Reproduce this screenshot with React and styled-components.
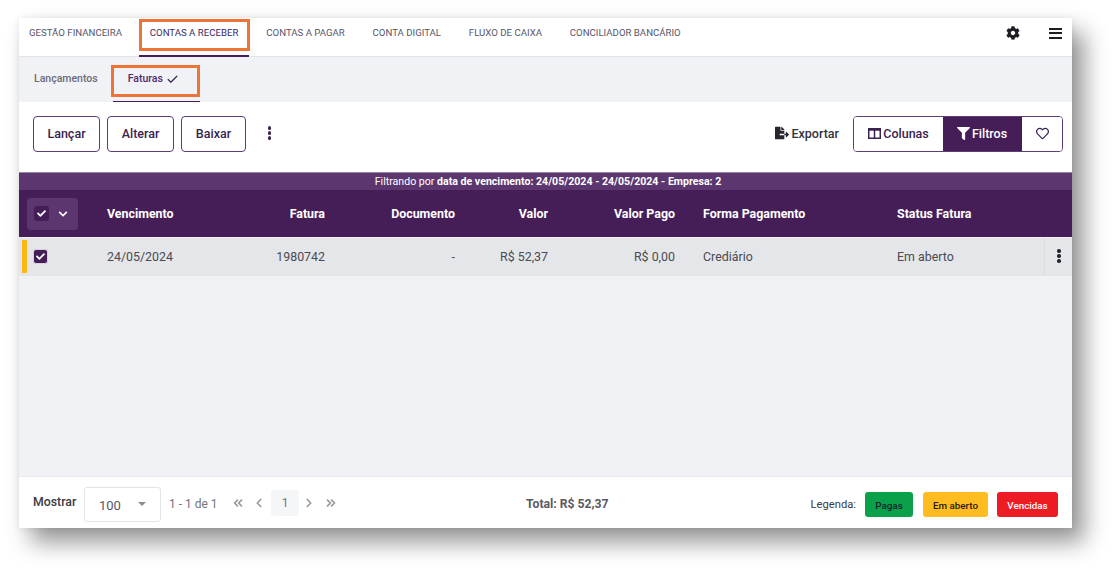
import React from 'react';
import styled, { createGlobalStyle } from 'styled-components';
import { FaCog, FaFileExport, FaFilter, FaCheck, FaChevronDown, FaRegHeart } from 'react-icons/fa';
import { FiCheck, FiChevronsLeft, FiChevronsRight, FiChevronLeft, FiChevronRight } from 'react-icons/fi';

const Global = createGlobalStyle`
  html, body { margin: 0; padding: 0; background: #fff; width: 1120px; height: 576px; overflow: hidden; }
  body { font-family: Roboto, "Liberation Sans", sans-serif; }
  * { box-sizing: border-box; }
`;

const Panel = styled.div`
  position: relative;
  margin: 18px 0 0 19px;
  width: 1053px;
  height: 510px;
  background: #f1f2f6;
  display: flex;
  flex-direction: column;
  box-shadow: 12px 14px 22px rgba(0,0,0,.42), 0 0 8px rgba(0,0,0,.08);
`;

const TopNav = styled.nav`
  height: 39px;
  background: #fff;
  border-bottom: 1px solid #e2e2e8;
  display: flex;
  align-items: flex-start;
  padding-left: 10px;
  flex: none;
`;
const NavItem = styled.div`
  font-size: 9.65px;
  height: ${p => (p.$active ? '39px' : '29px')};
  line-height: 29px;
  color: ${p => (p.$active ? '#3c2a66' : '#56566a')};
  border-bottom: ${p => (p.$active ? '2px solid #451e58' : '0')};
  padding: 0 ${p => (p.$active ? '11px' : '0')};
  margin-right: ${p => (p.$active ? '17px' : '27.8px')};
  margin-left: ${p => (p.$active ? '-11px' : '0')};
  white-space: nowrap;
`;
const NavRight = styled.div`
  margin-left: auto;
  display: flex;
  align-items: center;
  height: 30px;
  padding-right: 10px;
  color: #1d1d24;
  gap: 29px;
`;
const Burger = styled.div`
  width: 13px;
  height: 11px;
  display: flex;
  flex-direction: column;
  justify-content: space-between;
  span { display: block; height: 2px; background: #1d1d24; }
`;

const SubNav = styled.div`
  height: 45px;
  display: flex;
  padding-left: 15px;
  flex: none;
`;
const SubItem = styled.div`
  height: 45px;
  line-height: 43px;
  font-size: 10.5px;
  font-weight: 500;
  color: ${p => (p.$active ? '#4f2a6e' : '#6b6b76')};
  border-bottom: ${p => (p.$active ? '1.5px solid #451e58' : '0')};
  margin-left: ${p => (p.$active ? '15px' : '0')};
  padding: ${p => (p.$active ? '0 21px 0 15px' : '0')};
  display: flex;
  align-items: flex-start;
  gap: 3px;
  svg { margin-top: 16px; }
`;

const Toolbar = styled.div`
  height: 70px;
  background: #fff;
  display: flex;
  align-items: flex-start;
  padding: 14px 9px 0 14px;
  flex: none;
`;
const Btn = styled.button`
  height: 36px;
  width: ${p => p.$w}px;
  margin-right: 7px;
  background: #fff;
  border: 1px solid #5d3d78;
  border-radius: 4px;
  color: #3a2350;
  font: 500 12.5px Roboto, sans-serif;
  padding: 0 0 2px;
`;
const Dots = styled.div`
  display: flex;
  flex-direction: column;
  gap: 1.6px;
  align-items: center;
  justify-content: center;
  width: ${p => p.$w || 3}px;
  height: ${p => p.$h || 36}px;
  margin-left: ${p => p.$ml || 0}px;
  padding-bottom: ${p => p.$pb || 0}px;
  i { display: block; width: 3.4px; height: 3.4px; border-radius: 50%; background: ${p => p.$c || '#3a2350'}; flex: none; }
`;
const Export = styled.div`
  margin-left: auto;
  height: 36px;
  display: flex;
  align-items: center;
  gap: 2px;
  font-size: 12.5px;
  font-weight: 500;
  color: #33333d;
  margin-right: 14px;
  padding-bottom: 2px;
`;
const Group = styled.div`
  display: flex;
  height: 36px;
  border: 1px solid #5d3d78;
  border-radius: 4px;
  overflow: hidden;
`;
const GroupBtn = styled.div`
  width: ${p => p.$w}px;
  display: flex;
  align-items: center;
  justify-content: center;
  gap: 2px;
  font-size: 12.5px;
  font-weight: 500;
  padding: 0 ${p => (p.$on ? 1 : 0)}px 1px 0;
  color: ${p => (p.$on ? '#fff' : '#3a2350')};
  background: ${p => (p.$on ? '#451e58' : '#fff')};
`;

const FilterStrip = styled.div`
  height: 18px;
  background: #5c366f;
  border-top: 1px solid #9a85a8;
  color: #fff;
  font-size: 10.6px;
  line-height: 17px;
  text-align: center;
  padding-left: 5px;
  flex: none;
  b { font-weight: 700; }
`;

const Cols = `
  display: grid;
  grid-template-columns: 88px 109px 109px 130px 93px 127px 222px 1fr 28px;
`;
const HeadRow = styled.div`
  ${Cols}
  height: 47px;
  background: #451e58;
  color: #fff;
  font-size: 12.4px;
  font-weight: 700;
  align-items: center;
  flex: none;
`;
const BodyRow = styled.div`
  ${Cols}
  position: relative;
  height: 38px;
  margin-top: 1px;
  background: #e5e6e9;
  color: #4a4a52;
  font-size: 12.4px;
  align-items: center;
  flex: none;
`;
const Cell = styled.div`
  text-align: ${p => (p.$r ? 'right' : 'left')};
  padding-left: ${p => p.$pl || 0}px;
  padding-bottom: ${p => p.$pb || 0}px;
  white-space: nowrap;
`;
const HeadCheck = styled.div`
  margin-left: 8px;
  width: 51px;
  height: 32px;
  background: #5c366f;
  border-radius: 4px;
  display: flex;
  align-items: center;
  padding-left: 7px;
  gap: 9px;
`;
const CheckBox = styled.div`
  width: 15px;
  height: 15px;
  border-radius: 3px;
  background: #451e58;
  border: ${p => (p.$lined ? '0' : '1px solid #d8d0de')};
  display: flex;
  align-items: center;
  justify-content: center;
  color: #fff;
`;
const Stripe = styled.div`
  position: absolute;
  left: 3px;
  top: 2px;
  bottom: 3px;
  width: 5px;
  background: #fdb813;
`;
const MoreCell = styled.div`
  height: 100%;
  border-left: 1px solid #dcdde0;
  padding: 0 0 2px 1px;
  display: flex;
  align-items: center;
  justify-content: center;
`;

const Spacer = styled.div` flex: 1; `;

const Footer = styled.div`
  height: 52px;
  background: #fff;
  border-top: 1px solid #e9e9ee;
  display: flex;
  align-items: flex-start;
  padding: 0 14px;
  flex: none;
  position: relative;
`;
const Mostrar = styled.div`
  font-size: 12.3px;
  font-weight: 500;
  color: #3a3a42;
  margin-top: 18px;
  width: 51px;
`;
const SelectBox = styled.div`
  width: 77px;
  height: 35px;
  margin-top: 10px;
  border: 1px solid #e4e4e8;
  border-radius: 3px;
  display: flex;
  align-items: center;
  padding: 4px 14px 2px;
  justify-content: space-between;
  font-size: 13px;
  color: #55555f;
  &::after {
    content: '';
    border-left: 4px solid transparent;
    border-right: 4px solid transparent;
    border-top: 4px solid #8a8a92;
    margin-top: -3px;
  }
`;
const PageInfo = styled.div`
  font-size: 12px;
  color: #74747c;
  margin: 20px 0 0 8px;
  width: 60px;
  white-space: nowrap;
`;
const Pager = styled.div`
  display: flex;
  align-items: center;
  color: #9a9aa2;
  margin: 13px 0 0 0;
  height: 26px;
  font-size: 12px;
`;
const PageIcon = styled.div`
  width: ${p => p.$w}px;
  display: flex;
  justify-content: center;
`;
const PageNum = styled.div`
  width: 28px;
  height: 26px;
  border-radius: 3px;
  background: #f5f6f8;
  color: #74747c;
  display: flex;
  align-items: center;
  justify-content: center;
`;
const Total = styled.div`
  position: absolute;
  left: 507px;
  top: 20px;
  font-size: 12.2px;
  font-weight: 700;
  color: #5a5a64;
`;
const Legend = styled.div`
  margin-left: auto;
  margin-top: 15px;
  display: flex;
  align-items: center;
  height: 25px;
  font-size: 11.2px;
  color: #3a3a44;
`;
const Chip = styled.div`
  height: 25px;
  width: ${p => p.$w}px;
  margin-left: ${p => p.$ml}px;
  border-radius: 3px;
  background: ${p => p.$bg};
  color: ${p => p.$fg};
  font-size: 9.8px;
  font-weight: 500;
  padding-top: 1px;
  display: flex;
  align-items: center;
  justify-content: center;
`;

const Note = styled.div`
  position: absolute;
  left: ${p => p.$x}px;
  top: ${p => p.$y}px;
  width: ${p => p.$w}px;
  height: ${p => p.$h}px;
  border: 3px solid #ed7434;
  pointer-events: none;
`;

const head = [
  ['Vencimento', false, 0],
  ['Fatura', true, 0],
  ['Documento', true, 0],
  ['Valor', true, 0],
  ['Valor Pago', true, 0],
  ['Forma Pagamento', false, 28],
  ['Status Fatura', false, 0],
];
const row = [
  ['24/05/2024', false, 0],
  ['1980742', true, 0],
  ['-', true, 0],
  ['R$ 52,37', true, 0],
  ['R$ 0,00', true, 0],
  ['Crediário', false, 28],
  ['Em aberto', false, 0],
];

const ColumnsIcon = () => (
  <svg width="13" height="11" viewBox="0 0 13 11" fill="none">
    <rect x="0.75" y="0.75" width="11.5" height="9.5" stroke="#3a2350" strokeWidth="1.5" />
    <rect x="0.75" y="0.75" width="11.5" height="2" fill="#3a2350" />
    <path d="M6.5 1v9" stroke="#3a2350" strokeWidth="1.5" />
  </svg>
);

export default function App() {
  return (
    <>
      <Global />
      <Panel>
        <TopNav>
          <NavItem>GESTÃO FINANCEIRA</NavItem>
          <NavItem $active>CONTAS A RECEBER</NavItem>
          <NavItem>CONTAS A PAGAR</NavItem>
          <NavItem>CONTA DIGITAL</NavItem>
          <NavItem>FLUXO DE CAIXA</NavItem>
          <NavItem>CONCILIADOR BANCÁRIO</NavItem>
          <NavRight>
            <FaCog size={14} />
            <Burger><span /><span /><span /></Burger>
          </NavRight>
        </TopNav>
        <SubNav>
          <SubItem>Lançamentos</SubItem>
          <SubItem $active>Faturas <FiCheck size={13} strokeWidth={2.2} color="#3a2350" /></SubItem>
        </SubNav>
        <Toolbar>
          <Btn $w={67}>Lançar</Btn>
          <Btn $w={67}>Alterar</Btn>
          <Btn $w={65}>Baixar</Btn>
          <Dots $ml={15} $pb={2}><i /><i /><i /></Dots>
          <Export><FaFileExport size={14} color="#26262e" /> Exportar</Export>
          <Group>
            <GroupBtn $w={89}><ColumnsIcon /> Colunas</GroupBtn>
            <GroupBtn $w={79} $on><FaFilter size={13} /> Filtros</GroupBtn>
            <GroupBtn $w={40}><FaRegHeart size={13} /></GroupBtn>
          </Group>
        </Toolbar>
        <FilterStrip>Filtrando por <b>data de vencimento: 24/05/2024 - 24/05/2024 - Empresa: 2</b></FilterStrip>
        <HeadRow>
          <HeadCheck>
            <CheckBox $lined><FaCheck size={9} /></CheckBox>
            <FaChevronDown size={10} />
          </HeadCheck>
          {head.map(([t, r, pl]) => <Cell key={t} $r={r} $pl={pl}>{t}</Cell>)}
        </HeadRow>
        <BodyRow>
          <Stripe />
          <Cell $pl={14} $pb={2}><CheckBox><FaCheck size={9} /></CheckBox></Cell>
          {row.map(([t, r, pl]) => <Cell key={t} $r={r} $pl={pl} $pb={2}>{t}</Cell>)}
          <MoreCell><Dots $c="#26262e" $h={14}><i /><i /><i /></Dots></MoreCell>
        </BodyRow>
        <Spacer />
        <Footer>
          <Mostrar>Mostrar</Mostrar>
          <SelectBox>100</SelectBox>
          <PageInfo>1 - 1 de 1</PageInfo>
          <Pager>
            <PageIcon $w={18}><FiChevronsLeft size={14} strokeWidth={3} /></PageIcon>
            <PageIcon $w={24}><FiChevronLeft size={14} strokeWidth={3} /></PageIcon>
            <PageNum>1</PageNum>
            <PageIcon $w={19}><FiChevronRight size={14} strokeWidth={3} /></PageIcon>
            <PageIcon $w={26}><FiChevronsRight size={14} strokeWidth={3} /></PageIcon>
          </Pager>
          <Total>Total: R$ 52,37</Total>
          <Legend>
            Legenda:
            <Chip $w={48} $ml={9} $bg="#0ba14b" $fg="#10222a">Pagas</Chip>
            <Chip $w={65} $ml={10} $bg="#febc21" $fg="#2a1a10">Em aberto</Chip>
            <Chip $w={61} $ml={9} $bg="#ed1c24" $fg="#fff">Vencidas</Chip>
          </Legend>
        </Footer>
        <Note $x={120} $y={1} $w={111} $h={32} />
        <Note $x={92} $y={47} $w={89} $h={32} />
      </Panel>
    </>
  );
}
